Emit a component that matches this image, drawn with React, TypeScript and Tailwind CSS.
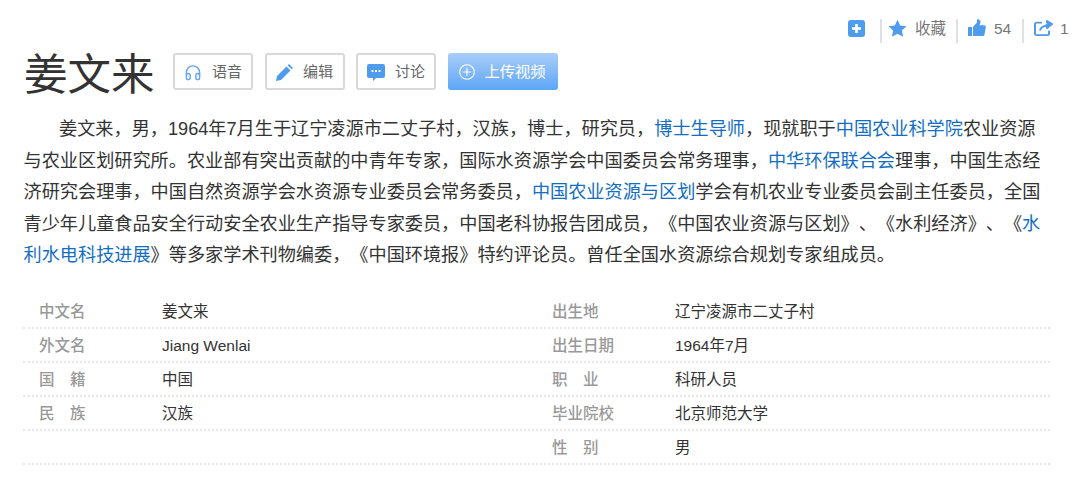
const rows = [
  ["中文名", "姜文来", "出生地", "辽宁凌源市二丈子村"],
  ["外文名", "Jiang Wenlai", "出生日期", "1964年7月"],
  ["国\u3000籍", "中国", "职\u3000业", "科研人员"],
  ["民\u3000族", "汉族", "毕业院校", "北京师范大学"],
  ["", "", "性\u3000别", "男"],
];

function Link({ children }: { children: string }) {
  return <span className="text-[#136ec2]">{children}</span>;
}

function ActionButton({ icon, label }: { icon: React.ReactNode; label: string }) {
  return (
    <div className="flex h-[37px] w-[80px] items-center justify-center gap-[10px] rounded-[3px] border-2 border-[#d9d9d9] pt-[1px] text-[15px] text-[#666]">
      {icon}
      <span>{label}</span>
    </div>
  );
}

export default function App() {
  return (
    <div className="h-[489px] w-[1080px] overflow-hidden bg-white font-['Liberation_Sans','Noto_Sans_CJK_SC',sans-serif] text-[#333] [text-spacing-trim:space-all]">
      <div className="flex h-[53px] items-start justify-end pt-[19px] text-[15.500px] text-[#777]">
        <div className="flex h-[24px] -translate-x-[6px] items-center">
          <svg width="17" height="17" viewBox="0 0 17 17" className="mr-[15px] -translate-y-[3px]">
            <rect width="17" height="17" rx="3" fill="#4f9bee" />
            <path d="M8.500 4v9M4 8.500h9" stroke="#fff" strokeWidth="2.600" />
          </svg>
          <div className="h-[24px] w-[2px] bg-[#dde1e6]" />
          <svg width="19" height="18" viewBox="0 0 24 23" className="mr-[8px] ml-[6px] -translate-y-[3px]">
            <path d="M12 1l3.400 7.400 8.100.9-6 5.500 1.700 8L12 18.800 4.800 22.800l1.700-8-6-5.500 8.100-.9z" fill="#4f9bee" />
          </svg>
          <span className="w-[31px] -translate-y-[2px]">收藏</span>
          <div className="ml-[10px] h-[24px] w-[2px] bg-[#dde1e6]" />
          <svg width="18" height="18" viewBox="0 0 18 20" preserveAspectRatio="none" className="mr-[8px] ml-[10px] -translate-y-[3px]">
            <path d="M0 9h4v10H0zM5 9l4-5V1.500C9 .5 10 0 11 .5c1.500.8 1.800 2.500 1.300 4L11.500 7H16c1.300 0 2 1 1.800 2.200l-1.300 8c-.2 1-1 1.800-2 1.800H5z" fill="#4f9bee" />
          </svg>
          <span className="w-[20px] -translate-y-[2px]">54</span>
          <div className="ml-[8px] h-[24px] w-[2px] bg-[#dde1e6]" />
          <svg width="19" height="16" viewBox="0 0 19 18" preserveAspectRatio="none" className="mr-[7px] ml-[10px] -translate-y-[3px]" fill="none" stroke="#4f9bee" strokeWidth="2">
            <path d="M8 3H2.500C1.600 3 1 3.600 1 4.500v11c0 .9.600 1.500 1.500 1.500h11c.9 0 1.500-.6 1.500-1.500V12" />
            <path d="M6 12c.5-3.500 3-5.500 7-5.500V9l5-4.500L13 1v2.500" fill="#4f9bee" strokeLinejoin="round" />
          </svg>
          <span className="w-[14px] -translate-y-[2px]">1</span>
        </div>
      </div>

      <div className="flex items-start pl-[24px]">
        <h1 className="h-[37px] w-[149px] font-['Noto_Sans_CJK_SC',serif] text-[43.500px] leading-[37px] font-normal text-[#333]">姜文来</h1>
        <div className="flex gap-[11.500px]">
          <ActionButton
            label="语音"
            icon={
              <svg width="18" height="17" viewBox="0 0 18 18" fill="none" stroke="#62a6f4" strokeWidth="1.500">
                <path d="M2 12V9a7 7 0 0 1 14 0v3" />
                <rect x="2" y="10" width="4" height="6.500" rx="2" />
                <rect x="12" y="10" width="4" height="6.500" rx="2" />
              </svg>
            }
          />
          <ActionButton
            label="编辑"
            icon={
              <svg width="17" height="17" viewBox="0 0 17 17" fill="#4f9bee">
                <path d="M0 17l1-5L10.500 2.500l4 4L5 16zM11.700 1.300 13 0l4 4-1.300 1.300z" />
              </svg>
            }
          />
          <ActionButton
            label="讨论"
            icon={
              <svg width="18" height="17" viewBox="0 0 18 17">
                <path d="M2 0h14a2 2 0 0 1 2 2v10a2 2 0 0 1-2 2H9l-3 3v-3H2a2 2 0 0 1-2-2V2a2 2 0 0 1 2-2z" fill="#4f9bee" />
                <path d="M4.500 7h2M8 7h2M11.500 7h2" stroke="#fff" strokeWidth="2" />
              </svg>
            }
          />
          <div className="flex h-[37px] w-[110px] items-center justify-center gap-[9px] rounded-[3px] bg-gradient-to-b from-[#a9cdf8] to-[#5ba5f6] pt-[1px] text-[15.300px] text-white">
            <svg width="16" height="16" viewBox="0 0 16 16" fill="none" stroke="#fff" strokeWidth="1.100">
              <circle cx="8" cy="8" r="7.300" />
              <path d="M8 4v8M4 8h8" />
            </svg>
            <span>上传视频</span>
          </div>
        </div>
      </div>

      <div className="mt-[24px] pl-[23.500px] text-[18.170px] leading-[31.500px] whitespace-nowrap text-[#333]">
        <div className="pl-[35.500px]">
          姜文来，男，1964年7月生于辽宁凌源市二丈子村，汉族，博士，研究员，<Link>博士生导师</Link>，现就职于<Link>中国农业科学院</Link>农业资源
        </div>
        <div>
          与农业区划研究所。农业部有突出贡献的中青年专家，国际水资源学会中国委员会常务理事，<Link>中华环保联合会</Link>理事，中国生态经
        </div>
        <div>
          济研究会理事，中国自然资源学会水资源专业委员会常务委员，<Link>中国农业资源与区划</Link>学会有机农业专业委员会副主任委员，全国
        </div>
        <div>
          青少年儿童食品安全行动安全农业生产指导专家委员，中国老科协报告团成员，《中国农业资源与区划》、《水利经济》、《<Link>水</Link>
        </div>
        <div>
          <Link>利水电科技进展</Link>》等多家学术刊物编委，《中国环境报》特约评论员。曾任全国水资源综合规划专家组成员。
        </div>
      </div>

      <div className="mt-[23px] ml-[23px] w-[1027px] text-[15.500px]">
        {rows.map((row) => (
          <div key={row[2]} className="flex h-[34px] items-center border-b-2 border-dotted border-[#e6e6e6] pt-[3px]">
            <span className="ml-[16px] w-[123px] font-medium text-[#999]">{row[0]}</span>
            <span className="w-[390px] text-[#333]">{row[1]}</span>
            <span className="w-[123px] font-medium text-[#999]">{row[2]}</span>
            <span className="text-[#333]">{row[3]}</span>
          </div>
        ))}
      </div>
    </div>
  );
}
